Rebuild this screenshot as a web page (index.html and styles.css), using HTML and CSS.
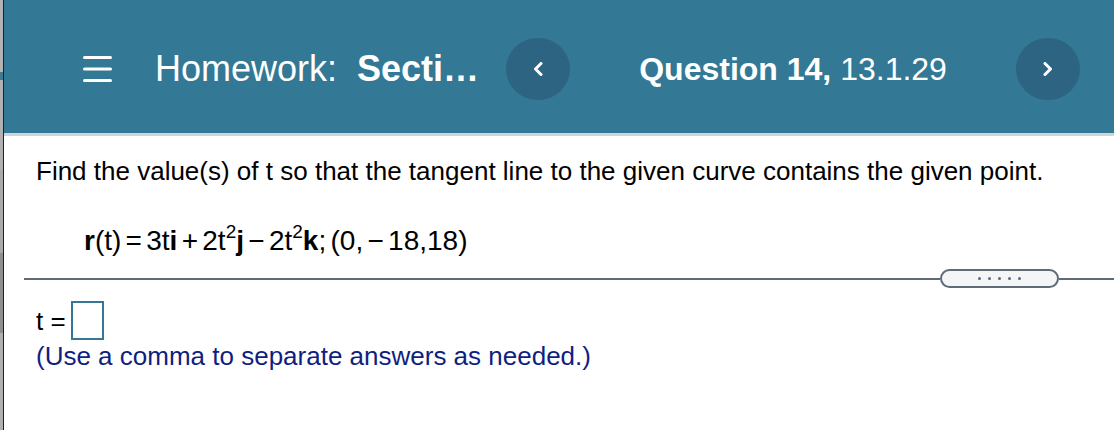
FILE: index.html
```html
<!DOCTYPE html>
<html lang="en">
<head>
<meta charset="utf-8">
<title>Homework: Section 13.1</title>
<link rel="stylesheet" href="styles.css">
</head>
<body>
<div class="frame">
  <div class="edge"></div>
  <div class="main">
    <header class="topbar">
      <svg class="menu" width="29" height="26" viewBox="0 0 29 26" aria-hidden="true">
        <g stroke="#ffffff" stroke-width="3" stroke-linecap="round">
          <line x1="1.5" y1="1.5" x2="27.5" y2="1.5"/>
          <line x1="1.5" y1="13" x2="27.5" y2="13"/>
          <line x1="1.5" y1="24.5" x2="27.5" y2="24.5"/>
        </g>
      </svg>
      <div class="title"><span>Homework:</span> <b class="sect">Secti…</b></div>
      <button class="nav prev" aria-label="Previous question">
        <svg width="10" height="14" viewBox="0 0 10 14"><polyline points="8,1.5 2.5,7 8,12.5" fill="none" stroke="#fff" stroke-width="3" stroke-linecap="round" stroke-linejoin="round"/></svg>
      </button>
      <div class="qtitle"><b>Question 14,</b> 13.1.29</div>
      <button class="nav next" aria-label="Next question">
        <svg width="10" height="14" viewBox="0 0 10 14"><polyline points="2,1.5 7.5,7 2,12.5" fill="none" stroke="#fff" stroke-width="3" stroke-linecap="round" stroke-linejoin="round"/></svg>
      </button>
    </header>
    <div class="strip"></div>
    <section class="content">
      <p class="prompt">Find the value(s) of t so that the tangent line to the given curve contains the given point.</p>
      <p class="formula"><b>r</b>(t) = 3t<b>i</b> + 2t<sup>2</sup><b>j</b> − 2t<sup>2</sup><b>k</b>; (0, − 18,18)</p>
      <div class="sep"><span class="pill"><i></i><i></i><i></i><i></i><i></i></span></div>
      <div class="answer"><span class="lbl">t =</span><span class="box"></span></div>
      <p class="hint">(Use a comma to separate answers as needed.)</p>
    </section>
  </div>
</div>
</body>
</html>
```

FILE: styles.css
```css
html, body {
  margin: 0;
  padding: 0;
  background: #ffffff;
}
body {
  width: 1114px;
  height: 430px;
  overflow: hidden;
  font-family: "Liberation Sans", Arial, Helvetica, sans-serif;
  color: #000000;
}
.frame {
  display: flex;
  height: 430px;
}
.edge {
  width: 3px;
  flex: none;
  border-right: 1px solid #1f1f1f;
  background: linear-gradient(to bottom,
    #b3b3b3 0, #b3b3b3 72px,
    #3f7b93 72px, #3f7b93 80px,
    #b1b1b1 80px, #b1b1b1 170px,
    #aaaaaa 170px, #aaaaaa 253px,
    #8f8f8f 253px, #8f8f8f 333px,
    #b0b0b0 333px, #b0b0b0 430px);
}
.main {
  flex: 1;
  min-width: 0;
}
.topbar {
  box-sizing: border-box;
  height: 133px;
  padding: 5px 34px 0 79px;
  background: #337894;
  display: flex;
  align-items: center;
  color: #ffffff;
}
.menu {
  flex: none;
  display: block;
}
.title {
  margin-left: 43px;
  font-size: 36px;
  white-space: nowrap;
}
.sect {
  margin-left: 10px;
}
.nav {
  flex: none;
  width: 64px;
  height: 62px;
  border: 0;
  padding: 0;
  border-radius: 50%;
  background: #2c6482;
  display: flex;
  align-items: center;
  justify-content: center;
}
.nav svg { display: block; }
.prev { margin-left: 27px; }
.qtitle {
  flex: 1;
  text-align: center;
  font-size: 32px;
  white-space: nowrap;
}
.strip {
  height: 3px;
  background: #cfd4d9;
}
.content {
  padding-left: 32px;
}
.prompt {
  margin: 20px 0 0;
  font-size: 26px;
  line-height: 30px;
}
.formula {
  margin: 40px 0 0 48px;
  font-size: 28px;
  line-height: 30px;
  word-spacing: -3.5px;
}
.formula sup {
  font-size: 19px;
  line-height: 0;
  vertical-align: 12px;
}
.sep {
  margin: 13px 0 0 -12px;
  height: 19px;
  display: flex;
  align-items: center;
}
.sep::before,
.sep::after {
  content: "";
  height: 2px;
  background: #5f6b77;
}
.sep::before { flex: 1; }
.sep::after { width: 55px; }
.pill {
  box-sizing: border-box;
  width: 119px;
  height: 19px;
  border: 2px solid #5f6b77;
  border-radius: 10px;
  background: #f4f5f7;
  display: flex;
  align-items: center;
  justify-content: center;
  gap: 7px;
}
.pill i {
  width: 3px;
  height: 3px;
  border-radius: 50%;
  background: #5f6b77;
}
.answer {
  margin-top: 13px;
  display: flex;
  align-items: center;
  font-size: 26px;
  line-height: 30px;
}
.box {
  box-sizing: border-box;
  width: 33px;
  height: 39px;
  margin-left: 5px;
  border: 2px solid #337894;
  background: #ffffff;
}
.hint {
  margin: 1px 0 0;
  font-size: 26px;
  line-height: 30px;
  color: #0f1f80;
}
```
